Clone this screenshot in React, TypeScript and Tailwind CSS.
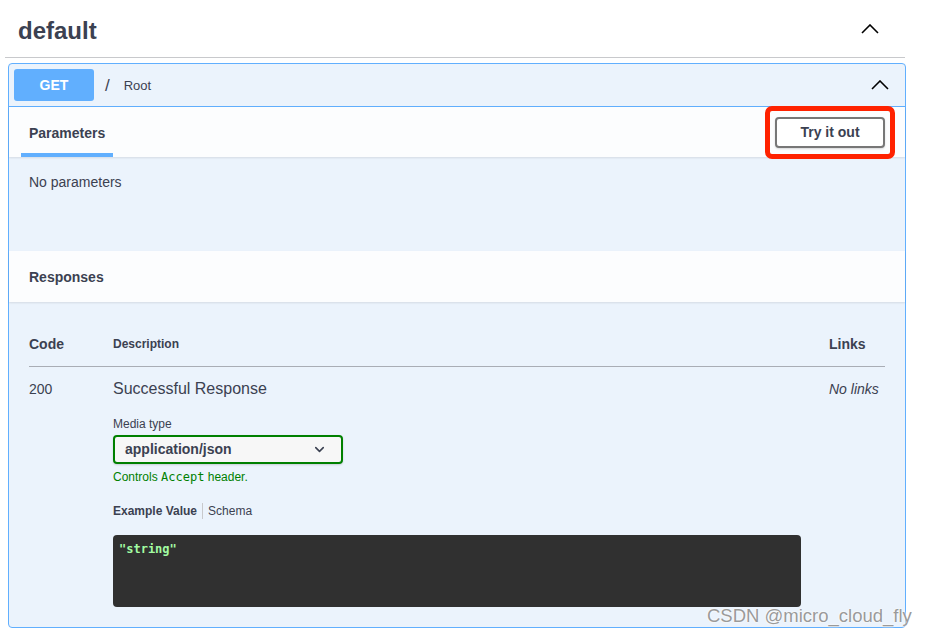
import React from 'react';
import { ChevronDown } from 'lucide-react';

const ChevronUp: React.FC<{ className?: string }> = ({ className }) => (
  <svg width="18" height="10" viewBox="0 0 18 10" className={className} fill="none">
    <polyline points="1,9 9,1 17,9" stroke="#000" strokeWidth="1.6" />
  </svg>
);

export default function App() {
  return (
    <div
      className="relative w-[930px] h-[634px] overflow-hidden bg-white text-[#3b4151]"
      style={{ fontFamily: '"Liberation Sans", Arial, sans-serif' }}
    >
      {/* tag heading */}
      <div className="mx-[5px] w-[900px] h-[58px] flex items-center justify-between pl-[13px] pr-[26px] border-b border-[#c8c9cc]">
        <h3 className="text-[24px] font-bold leading-none pt-[5px]">default</h3>
        <ChevronUp />
      </div>

      {/* opblock */}
      <div className="ml-[8px] mt-[5px] w-[898px] h-[565px] border border-[#61affe] rounded-[4px] bg-[#ebf3fc]">
        <div className="h-[43px] flex items-center px-[5px] border-b border-[#61affe]">
          <span className="w-[80px] h-[32px] rounded-[3px] bg-[#61affe] text-white text-[14px] font-bold flex items-center justify-center">
            GET
          </span>
          <span className="ml-[11px] text-[17px] leading-none">/</span>
          <span className="ml-[14px] text-[13px] leading-none">Root</span>
          <ChevronUp className="ml-auto mr-[11px]" />
        </div>

        {/* parameters header */}
        <div className="h-[50px] flex items-center justify-between pl-[12px] pr-[10px] bg-[#fcfdfe] shadow-[0_1px_2px_rgba(0,0,0,0.1)]">
          <div className="self-stretch flex flex-col justify-end">
            <span className="px-[8px] text-[14px] font-bold leading-none mb-[13px]">Parameters</span>
            <div className="h-[4px] bg-[#61affe] w-[92px]" />
          </div>
          <div className="border-[5px] border-[#ff2200] rounded-[7px] px-[5px] py-[6px]">
            <button className="block w-[110px] h-[31px] border-2 border-[#777] rounded-[4px] bg-white text-[14px] font-bold text-[#3b4151] shadow-[0_1px_2px_rgba(0,0,0,0.15)]">
              Try it out
            </button>
          </div>
        </div>

        <div className="h-[94px] px-[20px] pt-[17px] text-[14px] leading-[16px]">No parameters</div>

        {/* responses header */}
        <div className="h-[51px] flex items-center px-[20px] pt-[2px] bg-[#fcfdfe] shadow-[0_1px_2px_rgba(0,0,0,0.1)]">
          <span className="text-[14px] font-bold">Responses</span>
        </div>

        <div className="px-[20px]">
          <div className="flex items-center pt-[32px] pb-[12px] border-b border-[#a9adb5] leading-[20px]">
            <span className="w-[84px] text-[14px] font-bold">Code</span>
            <span className="flex-1 text-[12px] font-bold">Description</span>
            <span className="w-[56px] text-[14px] font-bold">Links</span>
          </div>

          <div className="flex pt-[12px]">
            <div className="w-[84px] text-[14px] leading-[20px]">200</div>
            <div className="flex-1">
              <div className="text-[16px] leading-[20px]">Successful Response</div>
              <div className="mt-[17px] text-[12px] leading-[16px]">Media type</div>
              <div className="mt-[3px] w-[230px] h-[29px] border-2 border-[#008000] rounded-[4px] bg-[#f7f7f7] flex items-center justify-between pl-[10px] pr-[14px] shadow-[0_1px_2px_rgba(0,0,0,0.15)]">
                <span className="text-[14px] font-bold">application/json</span>
                <ChevronDown size={15} strokeWidth={2.5} className="text-[#3b4151]" />
              </div>
              <div className="mt-[5px] text-[12px] leading-[16px] text-[#008000]">
                Controls <code style={{ fontFamily: '"DejaVu Sans Mono", monospace' }}>Accept</code> header.
              </div>
              <div className="mt-[18px] flex items-center text-[12px] leading-[16px]">
                <span className="font-bold pr-[5px] border-r border-[#c8c9cc]">Example Value</span>
                <span className="pl-[5px]">Schema</span>
              </div>
              <div className="mt-[16px] w-[688px] h-[72px] rounded-[4px] bg-[#303030] px-[6px] pt-[7px]">
                <pre
                  className="text-[12px] leading-[14px] font-bold text-[#a2fca2]"
                  style={{ fontFamily: '"DejaVu Sans Mono", monospace' }}
                >
                  "string"
                </pre>
              </div>
            </div>
            <div className="w-[56px] text-[14px] italic leading-[20px]">No links</div>
          </div>
        </div>
      </div>

      <div
        className="absolute left-[707px] top-[602px] text-[18.5px] text-[#9a9a9a]"
        style={{ textShadow: '0 0 2px #fff, 0 0 2px #fff' }}
      >
        CSDN @micro_cloud_fly
      </div>
    </div>
  );
}
